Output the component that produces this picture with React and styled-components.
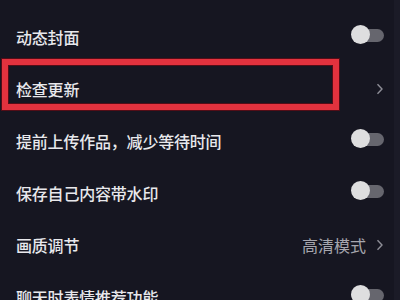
import React from "react";
import styled, { createGlobalStyle } from "styled-components";

const Global = createGlobalStyle`
  html, body { margin: 0; padding: 0; background: #161621; }
  body { font-family: "Noto Sans CJK SC", "Noto Sans", sans-serif; }
`;

const Page = styled.div`
  width: 400px;
  height: 300px;
  overflow: hidden;
  background: #161621;
  box-sizing: border-box;
  padding-top: 11px;
  box-shadow: inset -6px 0 0 #1b1b27;
  display: flex;
  flex-direction: column;
`;

const Row = styled.div`
  position: relative;
  height: 52px;
  flex: 0 0 52px;
  display: flex;
  align-items: center;
  justify-content: space-between;
  padding: 0 16px 0 16px;
  box-sizing: border-box;
`;

const Label = styled.span`
  font-size: 16px;
  font-weight: 500;
  color: #e8e8ec;
  letter-spacing: -0.2px;
  line-height: 1;
`;

const Right = styled.div`
  display: flex;
  align-items: center;
  gap: 10px;
`;

const Value = styled.span`
  font-size: 16px;
  color: #a6a6ae;
  line-height: 1;
`;

const Chevron = styled.svg`
  width: 8px;
  height: 12px;
  display: block;
`;

const Switch = styled.div`
  position: relative;
  width: 33px;
  height: 20px;
  margin-bottom: 5px;
  &::before {
    content: "";
    position: absolute;
    left: 2px;
    right: 0;
    top: 4px;
    height: 13px;
    border-radius: 7px;
    background: #66666e;
  }
  &::after {
    content: "";
    position: absolute;
    left: 0;
    top: 0;
    width: 19px;
    height: 19px;
    border-radius: 50%;
    background: #dededf;
  }
`;

const Highlight = styled.div`
  position: absolute;
  left: 2px;
  top: -4px;
  width: 337px;
  height: 51px;
  box-sizing: border-box;
  border: 6px solid #e2323e;
  box-shadow: 0 0 0 1px rgba(110, 10, 20, 0.7), inset 0 0 0 1px rgba(110, 10, 20, 0.7);
  pointer-events: none;
`;

const Arrow = () => (
  <Chevron viewBox="0 0 8 12">
    <path d="M1.5 1.2 L6 6 L1.5 10.8" fill="none" stroke="#8e8e97" strokeWidth="1.4" />
  </Chevron>
);

const rows = [
  { label: "动态封面", type: "switch" },
  { label: "检查更新", type: "arrow", highlight: true },
  { label: "提前上传作品，减少等待时间", type: "switch" },
  { label: "保存自己内容带水印", type: "switch" },
  { label: "画质调节", type: "arrow", value: "高清模式" },
  { label: "聊天时表情推荐功能", type: "switch" },
];

export default function App() {
  return (
    <>
      <Global />
      <Page>
        {rows.map((r) => (
          <Row key={r.label}>
            <Label>{r.label}</Label>
            {r.type === "switch" ? (
              <Switch />
            ) : (
              <Right>
                {r.value && <Value>{r.value}</Value>}
                <Arrow />
              </Right>
            )}
            {r.highlight && <Highlight />}
          </Row>
        ))}
      </Page>
    </>
  );
}
